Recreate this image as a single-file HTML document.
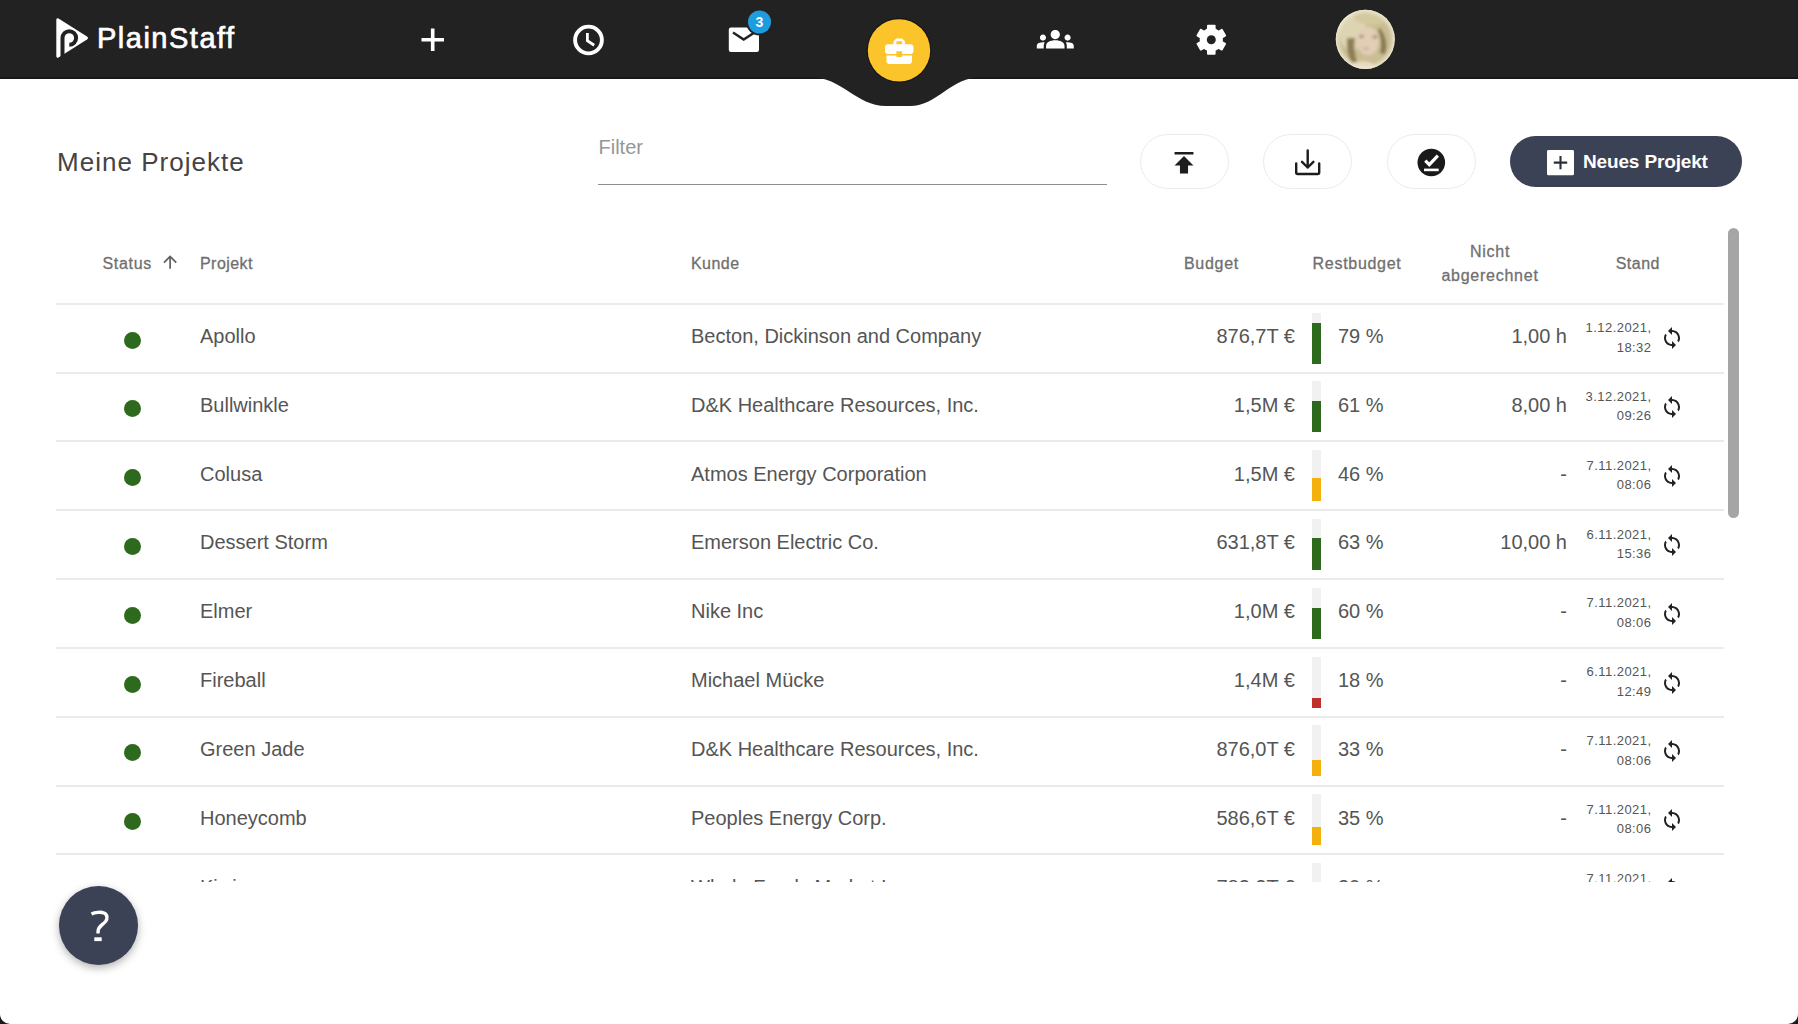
<!DOCTYPE html>
<html><head><meta charset="utf-8"><title>PlainStaff</title>
<style>
*{margin:0;padding:0;box-sizing:border-box}
html,body{width:1798px;height:1024px;overflow:hidden;background:#fff;font-family:"Liberation Sans",sans-serif}
body{position:relative}
.a{position:absolute;white-space:nowrap}
#hdr{position:absolute;left:0;top:0;width:1798px;height:78px;background:#222}
.th{position:absolute;color:#6f6f6f;font-size:16px;line-height:20px;white-space:nowrap;-webkit-text-stroke:0.3px #6f6f6f}
#tbl{position:absolute;left:0;top:0;width:1798px;height:882px;overflow:hidden}
.line{position:absolute;left:56px;width:1668px;height:2px;background:#ebebeb}
.c{position:absolute;font-size:20px;color:#555;line-height:24px;white-space:nowrap}
.dot{position:absolute;left:123.5px;width:17px;height:17px;border-radius:50%;background:#2e6a1d}
.bar{position:absolute;left:1312px;width:9px;height:51px;background:#f1f1f1}
.bar i{position:absolute;left:0;bottom:0;width:9px;display:block}
.dt{position:absolute;font-size:13px;line-height:19.5px;color:#555;text-align:right;right:146.5px;letter-spacing:0.45px;white-space:nowrap}
.sync{position:absolute;left:1660px;width:24px;height:24px}
.pill{position:absolute;top:133.5px;width:89px;height:55.5px;border:1.8px solid #ebebeb;border-radius:28px;background:#fff}

</style></head><body>
<div id="hdr"></div><div class="a" style="left:0;top:76.5px;width:1798px;height:2px;background:#181818"></div>
<svg class="a" style="left:0;top:0" width="1798" height="120" viewBox="0 0 1798 120">
<path d="M810 77 C842 77 856 106 886 106 L910 106 C938 106 950 77 982 77 Z" fill="#222"/>
<!-- logo -->
<path d="M58.5 18.5 Q56.3 17.5 56.3 20 L56.3 56 Q56.3 58.5 58.5 57.5 L87 39.5 Q89 38 87 36.5 Z" fill="#fff"/>
<path d="M62.5 57 L62.5 38 A6.8 6.8 0 1 1 69.3 44.8" fill="none" stroke="#222" stroke-width="4"/>
<!-- plus -->
<path d="M421.5 39.7 H444 M432.7 28.5 V51" stroke="#fff" stroke-width="3.6" fill="none"/>
<!-- clock -->
<circle cx="588.5" cy="40" r="13.4" stroke="#fff" stroke-width="3.9" fill="none"/>
<path d="M587.4 33 V40.8 L594.2 45.2" stroke="#fff" stroke-width="2.8" fill="none"/>
<!-- mail -->
<rect x="728.8" y="27.6" width="30.2" height="24.3" rx="2.2" fill="#fff"/>
<path d="M733 32.5 L743.7 39.6 L754.5 32.5" stroke="#222" stroke-width="2.5" fill="none"/>
<circle cx="759.5" cy="22" r="13.5" fill="#222"/>
<circle cx="759.5" cy="22" r="11.5" fill="#1e9ce0"/>
<text x="759.5" y="27" font-family="Liberation Sans" font-weight="bold" font-size="14" fill="#fff" text-anchor="middle">3</text>
<!-- yellow -->
<circle cx="899" cy="50.4" r="32.3" fill="#151515"/><circle cx="899" cy="50.4" r="31.2" fill="#fcc42b"/>
<g transform="translate(882.2,34.2) scale(1.42)"><path d="M10 16v-1H3.01L3 19c0 1.11.89 2 2 2h14c1.11 0 2-.89 2-2v-4h-7v1h-4zm10-9h-4.01V5l-2-2h-4l-2 2v2H4c-1.1 0-2 .9-2 2v3c0 1.11.89 2 2 2h6v-2h4v2h6c1.1 0 2-.9 2-2V9c0-1.1-.9-2-2-2zm-6 0h-4V5h4v2z" fill="#fff"/></g>
<!-- people -->
<g transform="translate(1036.8,20.66) scale(1.54)"><path d="M12 12.75c1.63 0 3.07.39 4.24.9 1.08.48 1.76 1.56 1.76 2.73V18H6v-1.61c0-1.18.68-2.26 1.76-2.73 1.170-.52 2.61-.91 4.24-.91zM4 13c1.1 0 2-.9 2-2s-.9-2-2-2-2 .9-2 2 .9 2 2 2zm1.13 1.1c-.37-.06-.74-.1-1.130-.1-.99 0-1.93.21-2.78.58C.48 14.9 0 15.620 0 16.43V18h4.5v-1.61c0-.83.23-1.61.63-2.29zM20 13c1.1 0 2-.9 2-2s-.9-2-2-2-2 .9-2 2 .9 2 2 2zm4 3.43c0-.81-.48-1.53-1.22-1.85-.85-.37-1.79-.58-2.78-.58-.39 0-.76.04-1.13.1.4.68.63 1.46.63 2.29V18H24v-1.57zM12 6c1.66 0 3 1.34 3 3s-1.34 3-3 3-3-1.34-3-3 1.34-3 3-3z" fill="#fff"/></g>
<!-- gear -->
<g transform="translate(1211.3,39.7)" fill="#fff"><circle r="11.6"/><rect x="-4.3" y="-15" width="8.6" height="7" rx="1" transform="rotate(0)"/><rect x="-4.3" y="-15" width="8.6" height="7" rx="1" transform="rotate(60)"/><rect x="-4.3" y="-15" width="8.6" height="7" rx="1" transform="rotate(120)"/><rect x="-4.3" y="-15" width="8.6" height="7" rx="1" transform="rotate(180)"/><rect x="-4.3" y="-15" width="8.6" height="7" rx="1" transform="rotate(240)"/><rect x="-4.3" y="-15" width="8.6" height="7" rx="1" transform="rotate(300)"/><circle r="4.5" fill="#222"/></g>
<!-- avatar -->
<defs><clipPath id="av"><circle cx="1365.3" cy="39.3" r="29.6"/></clipPath>
<filter id="bl" x="-20%" y="-20%" width="140%" height="140%"><feGaussianBlur stdDeviation="1.6"/></filter>
<radialGradient id="rim" cx="0.5" cy="0.5" r="0.5"><stop offset="0.8" stop-color="#e4dcc0" stop-opacity="0"/><stop offset="1" stop-color="#f0ecdc" stop-opacity="0.9"/></radialGradient></defs>
<g clip-path="url(#av)">
<rect x="1330" y="5" width="70" height="70" fill="#c9bd93"/>
<g filter="url(#bl)">
<ellipse cx="1352" cy="30" rx="14" ry="20" fill="#ddd4b2"/>
<ellipse cx="1372" cy="16" rx="18" ry="9" fill="#d3c89f"/>
<path d="M1347 38 Q1346 52 1352 64 L1357 62 Q1353 50 1355 38Z" fill="#8f7d55"/>
<path d="M1380 28 Q1389 40 1385 54 L1380 53 Q1383 42 1378 30Z" fill="#8a7850"/>
<ellipse cx="1368" cy="41" rx="11" ry="14.5" fill="#e2ceb4"/>
<ellipse cx="1361.5" cy="36.5" rx="2.6" ry="1.4" fill="#9d8873"/>
<ellipse cx="1375" cy="37" rx="2.6" ry="1.4" fill="#9d8873"/>
<ellipse cx="1366" cy="48.5" rx="3.5" ry="1.3" fill="#cfaea0"/>
<ellipse cx="1363" cy="68" rx="12" ry="7" fill="#e8d9c0"/>
</g>
<circle cx="1365.3" cy="39.3" r="29.6" fill="url(#rim)"/>
</g>
</svg>
<div class="a" style="left:97px;top:20.6px;font-size:29px;line-height:34px;color:#fff;letter-spacing:1.5px;-webkit-text-stroke:0.7px #fff">PlainStaff</div>
<!-- title -->
<div class="a" style="left:57px;top:147px;font-size:26px;line-height:30px;color:#444;letter-spacing:1.03px">Meine Projekte</div>
<div class="a" style="left:598.5px;top:134.5px;font-size:20px;line-height:24px;color:#969696">Filter</div>
<div class="a" style="left:598px;top:183.5px;width:509px;height:1.6px;background:#8d8d8d"></div>
<!-- pill buttons -->
<div class="pill" style="left:1139.5px"></div>
<div class="pill" style="left:1263px"></div>
<div class="pill" style="left:1386.5px"></div>
<svg class="a" style="left:0;top:130px" width="1798" height="70" viewBox="0 130 1798 70">
<g transform="translate(1167.8,146.5) scale(1.35)"><path d="M5 4v2h14V4H5zm0 10h4v6h6v-6h4l-7-7-7 7z" fill="#1d1d1d"/></g>
<path d="M1296.2 163.5 V172.5 Q1296.2 174 1297.7 174 H1317.7 Q1319.2 174 1319.2 172.5 V163.5" stroke="#1d1d1d" stroke-width="2.4" fill="none" stroke-linecap="round"/><path d="M1307.7 150.5 V167.5 M1302 161.8 L1307.7 167.5 L1313.4 161.8" stroke="#1d1d1d" stroke-width="2.4" fill="none" stroke-linecap="round" stroke-linejoin="round"/>
<circle cx="1431.3" cy="162.5" r="13.8" fill="#1a1a1a"/>
<path d="M1425.3 160.6 L1429.3 164.6 L1437.9 155.7" stroke="#fff" stroke-width="3.2" fill="none"/>
<path d="M1424 169.9 H1438.7" stroke="#fff" stroke-width="2.6"/>
</svg>
<!-- neues projekt -->
<div class="a" style="left:1510px;top:136px;width:231.5px;height:50.5px;border-radius:25.5px;background:#3c4256"></div>
<svg class="a" style="left:1547px;top:150.3px" width="27" height="25.3" viewBox="0 0 27 25.3"><rect width="27" height="25.3" rx="1.5" fill="#fff"/><path d="M6.8 12.65 H20.2 M13.5 6 V19.3" stroke="#2b2f3d" stroke-width="2.1"/></svg>
<div class="a" style="left:1583px;top:150.8px;font-size:19px;line-height:22px;font-weight:bold;color:#fff;letter-spacing:-0.15px">Neues Projekt</div>
<!-- table header -->
<div class="th" style="left:102.5px;top:253.9px;letter-spacing:0.7px">Status</div>
<svg class="a" style="left:159.7px;top:252px" width="22" height="22" viewBox="0 0 24 24" preserveAspectRatio="none"><g transform="scale(0.92)"><path d="M4 12l1.41 1.41L11 7.83V20h2V7.83l5.58 5.59L20 12l-8-8-8 8z" fill="#5f5f5f"/></g></svg>
<div class="th" style="left:200px;top:253.9px;letter-spacing:0.45px">Projekt</div>
<div class="th" style="left:691px;top:253.9px;letter-spacing:0.45px">Kunde</div>
<div class="th" style="left:1184px;top:253.9px;letter-spacing:0.7px">Budget</div>
<div class="th" style="left:1312.6px;top:253.9px;letter-spacing:0.7px">Restbudget</div>
<div class="th" style="left:1430px;width:120px;text-align:center;top:240px;line-height:23.6px;letter-spacing:0.75px">Nicht<br>abgerechnet</div>
<div class="th" style="left:1615.7px;top:253.9px;letter-spacing:0.5px">Stand</div>
<!-- scrollbar -->
<div class="a" style="left:1727.5px;top:227.7px;width:11.5px;height:290.5px;border-radius:6px;background:#a5a5a5"></div>
<div id="tbl">
<div class="line" style="top:302.75px"></div>
<div class="dot" style="top:331.50px"></div>
<div class="c" style="left:200px;top:324.00px">Apollo</div>
<div class="c" style="left:691px;top:324.00px">Becton, Dickinson and Company</div>
<div class="c r" style="right:503px;top:324.00px">876,7T €</div>
<div class="bar" style="top:312.50px"><i style="height:40.3px;background:#2e6a1d"></i></div>
<div class="c" style="left:1338px;top:324.00px">79 %</div>
<div class="c r" style="right:231px;top:324.00px">1,00 h</div>
<div class="dt" style="top:318.10px">1.12.2021,<br>18:32</div>
<svg class="sync" style="top:326.40px" viewBox="0 0 24 24"><path d="M12 4V1L8 5l4 4V6c3.31 0 6 2.69 6 6 0 1.01-.25 1.97-.7 2.8l1.46 1.46C19.54 15.03 20 13.57 20 12c0-4.42-3.58-8-8-8zm0 14c-3.31 0-6-2.69-6-6 0-1.01.25-1.97.7-2.8L5.24 7.74C4.46 8.97 4 10.43 4 12c0 4.42 3.58 8 8 8v3l4-4-4-4v3z" fill="#222"/></svg>
<div class="line" style="top:371.58px"></div>
<div class="dot" style="top:400.33px"></div>
<div class="c" style="left:200px;top:392.83px">Bullwinkle</div>
<div class="c" style="left:691px;top:392.83px">D&amp;K Healthcare Resources, Inc.</div>
<div class="c r" style="right:503px;top:392.83px">1,5M €</div>
<div class="bar" style="top:381.33px"><i style="height:31.1px;background:#2e6a1d"></i></div>
<div class="c" style="left:1338px;top:392.83px">61 %</div>
<div class="c r" style="right:231px;top:392.83px">8,00 h</div>
<div class="dt" style="top:386.93px">3.12.2021,<br>09:26</div>
<svg class="sync" style="top:395.23px" viewBox="0 0 24 24"><path d="M12 4V1L8 5l4 4V6c3.31 0 6 2.69 6 6 0 1.01-.25 1.97-.7 2.8l1.46 1.46C19.54 15.03 20 13.57 20 12c0-4.42-3.58-8-8-8zm0 14c-3.31 0-6-2.69-6-6 0-1.01.25-1.97.7-2.8L5.24 7.74C4.46 8.97 4 10.43 4 12c0 4.42 3.58 8 8 8v3l4-4-4-4v3z" fill="#222"/></svg>
<div class="line" style="top:440.41px"></div>
<div class="dot" style="top:469.16px"></div>
<div class="c" style="left:200px;top:461.66px">Colusa</div>
<div class="c" style="left:691px;top:461.66px">Atmos Energy Corporation</div>
<div class="c r" style="right:503px;top:461.66px">1,5M €</div>
<div class="bar" style="top:450.16px"><i style="height:23.5px;background:#f4b00c"></i></div>
<div class="c" style="left:1338px;top:461.66px">46 %</div>
<div class="c r" style="right:231px;top:461.66px">-</div>
<div class="dt" style="top:455.76px">7.11.2021,<br>08:06</div>
<svg class="sync" style="top:464.06px" viewBox="0 0 24 24"><path d="M12 4V1L8 5l4 4V6c3.31 0 6 2.69 6 6 0 1.01-.25 1.97-.7 2.8l1.46 1.46C19.54 15.03 20 13.57 20 12c0-4.42-3.58-8-8-8zm0 14c-3.31 0-6-2.69-6-6 0-1.01.25-1.97.7-2.8L5.24 7.74C4.46 8.97 4 10.43 4 12c0 4.42 3.58 8 8 8v3l4-4-4-4v3z" fill="#222"/></svg>
<div class="line" style="top:509.24px"></div>
<div class="dot" style="top:537.99px"></div>
<div class="c" style="left:200px;top:530.49px">Dessert Storm</div>
<div class="c" style="left:691px;top:530.49px">Emerson Electric Co.</div>
<div class="c r" style="right:503px;top:530.49px">631,8T €</div>
<div class="bar" style="top:518.99px"><i style="height:32.1px;background:#2e6a1d"></i></div>
<div class="c" style="left:1338px;top:530.49px">63 %</div>
<div class="c r" style="right:231px;top:530.49px">10,00 h</div>
<div class="dt" style="top:524.59px">6.11.2021,<br>15:36</div>
<svg class="sync" style="top:532.89px" viewBox="0 0 24 24"><path d="M12 4V1L8 5l4 4V6c3.31 0 6 2.69 6 6 0 1.01-.25 1.97-.7 2.8l1.46 1.46C19.54 15.03 20 13.57 20 12c0-4.42-3.58-8-8-8zm0 14c-3.31 0-6-2.69-6-6 0-1.01.25-1.97.7-2.8L5.24 7.74C4.46 8.97 4 10.43 4 12c0 4.42 3.58 8 8 8v3l4-4-4-4v3z" fill="#222"/></svg>
<div class="line" style="top:578.07px"></div>
<div class="dot" style="top:606.82px"></div>
<div class="c" style="left:200px;top:599.32px">Elmer</div>
<div class="c" style="left:691px;top:599.32px">Nike Inc</div>
<div class="c r" style="right:503px;top:599.32px">1,0M €</div>
<div class="bar" style="top:587.82px"><i style="height:30.6px;background:#2e6a1d"></i></div>
<div class="c" style="left:1338px;top:599.32px">60 %</div>
<div class="c r" style="right:231px;top:599.32px">-</div>
<div class="dt" style="top:593.42px">7.11.2021,<br>08:06</div>
<svg class="sync" style="top:601.72px" viewBox="0 0 24 24"><path d="M12 4V1L8 5l4 4V6c3.31 0 6 2.69 6 6 0 1.01-.25 1.97-.7 2.8l1.46 1.46C19.54 15.03 20 13.57 20 12c0-4.42-3.58-8-8-8zm0 14c-3.31 0-6-2.69-6-6 0-1.01.25-1.97.7-2.8L5.24 7.74C4.46 8.97 4 10.43 4 12c0 4.42 3.58 8 8 8v3l4-4-4-4v3z" fill="#222"/></svg>
<div class="line" style="top:646.90px"></div>
<div class="dot" style="top:675.65px"></div>
<div class="c" style="left:200px;top:668.15px">Fireball</div>
<div class="c" style="left:691px;top:668.15px">Michael Mücke</div>
<div class="c r" style="right:503px;top:668.15px">1,4M €</div>
<div class="bar" style="top:656.65px"><i style="height:9.2px;background:#c0302a"></i></div>
<div class="c" style="left:1338px;top:668.15px">18 %</div>
<div class="c r" style="right:231px;top:668.15px">-</div>
<div class="dt" style="top:662.25px">6.11.2021,<br>12:49</div>
<svg class="sync" style="top:670.55px" viewBox="0 0 24 24"><path d="M12 4V1L8 5l4 4V6c3.31 0 6 2.69 6 6 0 1.01-.25 1.97-.7 2.8l1.46 1.46C19.54 15.03 20 13.57 20 12c0-4.42-3.58-8-8-8zm0 14c-3.31 0-6-2.69-6-6 0-1.01.25-1.97.7-2.8L5.24 7.74C4.46 8.97 4 10.43 4 12c0 4.42 3.58 8 8 8v3l4-4-4-4v3z" fill="#222"/></svg>
<div class="line" style="top:715.73px"></div>
<div class="dot" style="top:744.48px"></div>
<div class="c" style="left:200px;top:736.98px">Green Jade</div>
<div class="c" style="left:691px;top:736.98px">D&amp;K Healthcare Resources, Inc.</div>
<div class="c r" style="right:503px;top:736.98px">876,0T €</div>
<div class="bar" style="top:725.48px"><i style="height:16.8px;background:#f4b00c"></i></div>
<div class="c" style="left:1338px;top:736.98px">33 %</div>
<div class="c r" style="right:231px;top:736.98px">-</div>
<div class="dt" style="top:731.08px">7.11.2021,<br>08:06</div>
<svg class="sync" style="top:739.38px" viewBox="0 0 24 24"><path d="M12 4V1L8 5l4 4V6c3.31 0 6 2.69 6 6 0 1.01-.25 1.97-.7 2.8l1.46 1.46C19.54 15.03 20 13.57 20 12c0-4.42-3.58-8-8-8zm0 14c-3.31 0-6-2.69-6-6 0-1.01.25-1.97.7-2.8L5.24 7.74C4.46 8.97 4 10.43 4 12c0 4.42 3.58 8 8 8v3l4-4-4-4v3z" fill="#222"/></svg>
<div class="line" style="top:784.56px"></div>
<div class="dot" style="top:813.31px"></div>
<div class="c" style="left:200px;top:805.81px">Honeycomb</div>
<div class="c" style="left:691px;top:805.81px">Peoples Energy Corp.</div>
<div class="c r" style="right:503px;top:805.81px">586,6T €</div>
<div class="bar" style="top:794.31px"><i style="height:17.9px;background:#f4b00c"></i></div>
<div class="c" style="left:1338px;top:805.81px">35 %</div>
<div class="c r" style="right:231px;top:805.81px">-</div>
<div class="dt" style="top:799.91px">7.11.2021,<br>08:06</div>
<svg class="sync" style="top:808.21px" viewBox="0 0 24 24"><path d="M12 4V1L8 5l4 4V6c3.31 0 6 2.69 6 6 0 1.01-.25 1.97-.7 2.8l1.46 1.46C19.54 15.03 20 13.57 20 12c0-4.42-3.58-8-8-8zm0 14c-3.31 0-6-2.69-6-6 0-1.01.25-1.97.7-2.8L5.24 7.74C4.46 8.97 4 10.43 4 12c0 4.42 3.58 8 8 8v3l4-4-4-4v3z" fill="#222"/></svg>
<div class="line" style="top:853.39px"></div>
<div class="dot" style="top:882.14px"></div>
<div class="c" style="left:200px;top:874.64px">Kiwi</div>
<div class="c" style="left:691px;top:874.64px">Whole Foods Market Inc</div>
<div class="c r" style="right:503px;top:874.64px">783,2T €</div>
<div class="bar" style="top:863.14px"><i style="height:15.3px;background:#f4b00c"></i></div>
<div class="c" style="left:1338px;top:874.64px">30 %</div>
<div class="c r" style="right:231px;top:874.64px">-</div>
<div class="dt" style="top:868.74px">7.11.2021,<br>08:06</div>
<svg class="sync" style="top:877.04px" viewBox="0 0 24 24"><path d="M12 4V1L8 5l4 4V6c3.31 0 6 2.69 6 6 0 1.01-.25 1.97-.7 2.8l1.46 1.46C19.54 15.03 20 13.57 20 12c0-4.42-3.58-8-8-8zm0 14c-3.31 0-6-2.69-6-6 0-1.01.25-1.97.7-2.8L5.24 7.74C4.46 8.97 4 10.43 4 12c0 4.42 3.58 8 8 8v3l4-4-4-4v3z" fill="#222"/></svg>
<div class="line" style="top:922.22px"></div>
</div><div class="a" style="left:58.5px;top:886px;width:79.5px;height:79px;border-radius:50%;background:#3c4256;box-shadow:0 3px 8px rgba(0,0,0,0.3)"></div>
<svg class="a" style="left:80px;top:900px" width="40" height="50" viewBox="80 900 40 50"><path d="M91.5 914 C95 912.2 101 911.8 104 913 C107.5 914.5 107.8 918.5 105.5 921.5 C103 924.5 98.8 926.5 98.2 930 L98 933.5" stroke="#fff" stroke-width="3.4" fill="none"/><rect x="94.3" y="937.3" width="7.4" height="3.8" fill="#fff"/></svg>
<svg class="a" style="left:0;top:1004px" width="1798" height="20" viewBox="0 1004 1798 20"><path d="M0 1014 A10 10 0 0 0 10 1024 L0 1024Z" fill="#1a1a1a"/><path d="M1798 1014 A10 10 0 0 1 1788 1024 L1798 1024Z" fill="#1a1a1a"/></svg>
</body></html>
